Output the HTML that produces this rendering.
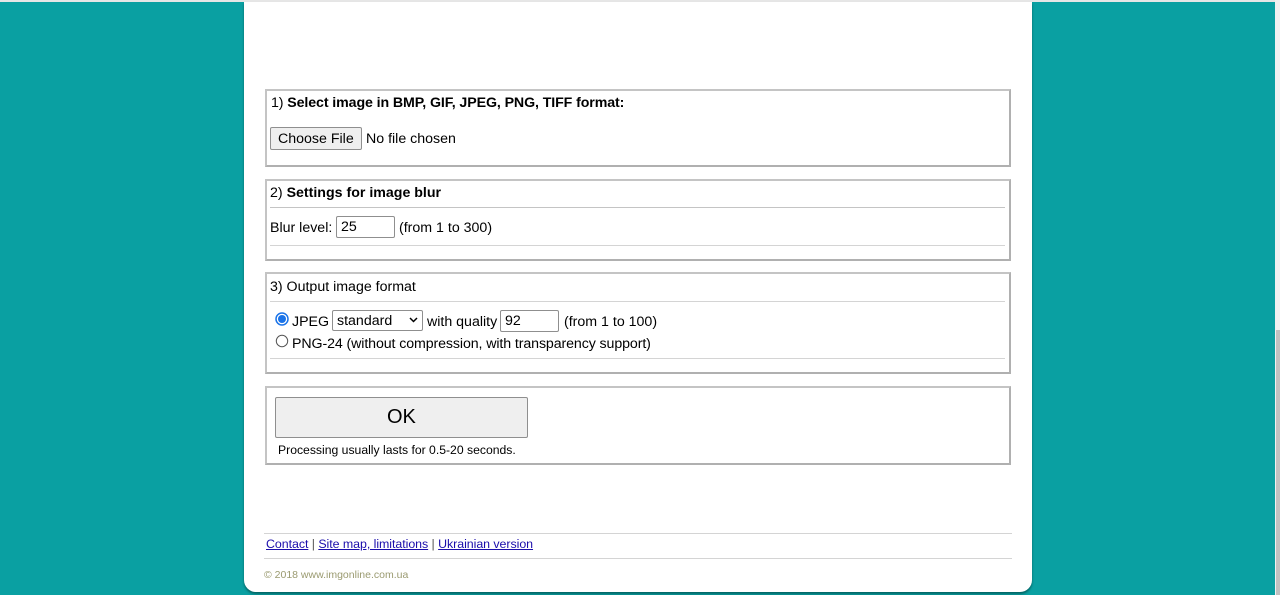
<!DOCTYPE html>
<html><head><meta charset="utf-8"><style>
*{margin:0;padding:0;box-sizing:border-box}
body{width:1280px;height:595px;background:#0aa0a2;font-family:"Liberation Sans",Arial,sans-serif;font-size:14.2px;color:#000;position:relative;overflow:hidden}
.top{position:absolute;left:0;top:0;width:1280px;height:2px;background:#e6e6e6}
.sb{position:absolute;left:1275px;top:0;width:5px;height:595px;background:#f1f1f1}
.sbt{position:absolute;left:1276px;top:330px;width:4px;height:265px;background:#c1c1c1}
.card{position:absolute;left:244px;top:2px;width:788px;height:590px;background:#fff;border-radius:0 0 12px 12px;box-shadow:0 2px 2px rgba(0,60,60,.6)}
.box{position:absolute;left:265px;width:746px;border:2px solid #c4c4c4;border-right-color:#b0b0b0;border-bottom-color:#b0b0b0}
.t{position:absolute;white-space:nowrap}
.hr{position:absolute;height:1px;background:#d4d4d4}
.btn{position:absolute;background:#efefef;border:1px solid #8f8f8f;border-radius:2px}
.inp{position:absolute;border:1px solid #8f8f8f;border-radius:2px;background:#fff;padding-left:4px;line-height:20px}
a{color:#1a0dab}
</style></head><body>
<div class="top"></div>
<div class="sb"></div><div class="sbt"></div>
<div class="card"></div>

<div class="box" style="top:89px;height:78px"></div>
<div class="t" style="left:271px;top:95px;letter-spacing:-0.1px">1) <b>Select image in BMP, GIF, JPEG, PNG, TIFF format:</b></div>
<div class="btn" style="left:270px;top:127px;width:92px;height:23px"></div>
<div class="t" style="left:278px;top:131px">Choose File</div>
<div class="t" style="left:366px;top:131px">No file chosen</div>

<div class="box" style="top:179px;height:82px"></div>
<div class="t" style="left:270px;top:185px">2) <b>Settings for image blur</b></div>
<div class="hr" style="left:270px;top:207px;width:735px;background:#c4c4c4"></div>
<div class="t" style="left:270px;top:220px">Blur level:</div>
<div class="inp" style="left:336px;top:216px;width:59px;height:22px">25</div>
<div class="t" style="left:399px;top:220px">(from 1 to 300)</div>
<div class="hr" style="left:270px;top:245px;width:735px"></div>

<div class="box" style="top:272px;height:102px"></div>
<div class="t" style="left:270px;top:279px">3) Output image format</div>
<div class="hr" style="left:270px;top:301px;width:735px"></div>
<svg style="position:absolute;left:275px;top:312px" width="14" height="14"><circle cx="7" cy="7" r="6" fill="#fff" stroke="#1a73e8" stroke-width="1.5"/><circle cx="7" cy="7" r="4" fill="#1a73e8"/></svg>
<div class="t" style="left:292px;top:314px">JPEG</div>
<div class="inp" style="left:332px;top:310px;width:91px;height:21px">standard</div>
<svg style="position:absolute;left:409px;top:317px" width="9" height="6"><path d="M1 1L4.5 4.5L8 1" fill="none" stroke="#000" stroke-width="1.5"/></svg>
<div class="t" style="left:427px;top:314px">with quality</div>
<div class="inp" style="left:500px;top:310px;width:59px;height:22px">92</div>
<div class="t" style="left:564px;top:314px">(from 1 to 100)</div>
<svg style="position:absolute;left:275px;top:334px" width="14" height="14"><circle cx="7" cy="7" r="5.7" fill="#fff" stroke="#555" stroke-width="1"/></svg>
<div class="t" style="left:292px;top:336px;letter-spacing:-0.1px">PNG-24 (without compression, with transparency support)</div>
<div class="hr" style="left:270px;top:358px;width:735px"></div>

<div class="box" style="top:386px;height:79px"></div>
<div class="btn" style="left:275px;top:397px;width:253px;height:41px"></div>
<div class="t" style="left:387px;top:406px;font-size:20px">OK</div>
<div class="t" style="left:278px;top:443px;font-size:12.2px">Processing usually lasts for 0.5-20 seconds.</div>

<div class="hr" style="left:264px;top:533px;width:748px"></div>
<div class="t" style="left:266px;top:537px;font-size:12.4px;color:#555;letter-spacing:-0.05px"><a href="#">Contact</a> | <a href="#">Site map, limitations</a> | <a href="#">Ukrainian version</a></div>
<div class="hr" style="left:264px;top:558px;width:748px"></div>
<div class="t" style="left:264px;top:569px;font-size:10.5px;color:#9a9a70">© 2018 www.imgonline.com.ua</div>
</body></html>
